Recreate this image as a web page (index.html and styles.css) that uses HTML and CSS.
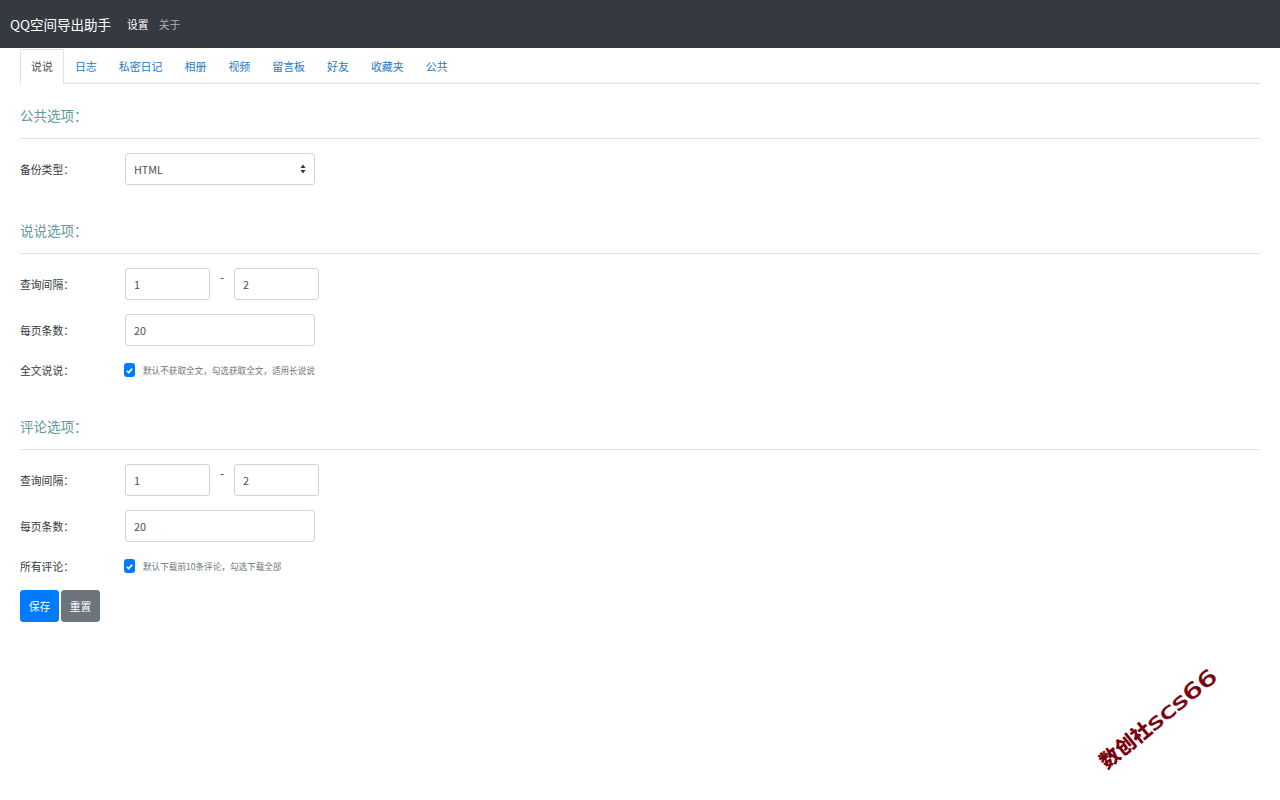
FILE: index.html
```html
<!DOCTYPE html>
<html lang="zh-CN">
<head>
<meta charset="utf-8">
<title>QQ空间导出助手</title>
<link rel="stylesheet" href="styles.css">
</head>
<body>
<nav class="navbar">
  <span class="brand">QQ空间导出助手</span>
  <a class="nav-link active">设置</a>
  <a class="nav-link">关于</a>
</nav>
<main class="content">
  <ul class="tabs">
    <li class="tab active">说说</li>
    <li class="tab">日志</li>
    <li class="tab">私密日记</li>
    <li class="tab">相册</li>
    <li class="tab">视频</li>
    <li class="tab">留言板</li>
    <li class="tab">好友</li>
    <li class="tab">收藏夹</li>
    <li class="tab">公共</li>
  </ul>

  <section class="section first">
    <h5 class="title">公共选项：</h5>
    <div class="row">
      <label class="label">备份类型：</label>
      <div class="select"><span>HTML</span>
        <svg class="carets" width="6" height="10" viewBox="0 0 6 10"><path d="M3 0.5 5.6 4H.4zM3 9.5.4 6h5.2z" fill="#343a40"/></svg>
      </div>
    </div>
  </section>

  <section class="section padded">
    <h5 class="title">说说选项：</h5>
    <div class="row">
      <label class="label">查询间隔：</label>
      <div class="input small">1</div>
      <span class="dash">-</span>
      <div class="input small">2</div>
    </div>
    <div class="row">
      <label class="label">每页条数：</label>
      <div class="input wide">20</div>
    </div>
    <div class="row check-row">
      <label class="label">全文说说：</label>
      <span class="check"><svg width="11" height="11" viewBox="0 0 11 11"><path d="M2.8 5.7 4.7 7.6 8.2 3.6" fill="none" stroke="#fff" stroke-width="1.6"/></svg></span>
      <small class="hint">默认不获取全文，勾选获取全文，适用长说说</small>
    </div>
  </section>

  <section class="section padded">
    <h5 class="title">评论选项：</h5>
    <div class="row">
      <label class="label">查询间隔：</label>
      <div class="input small">1</div>
      <span class="dash">-</span>
      <div class="input small">2</div>
    </div>
    <div class="row">
      <label class="label">每页条数：</label>
      <div class="input wide">20</div>
    </div>
    <div class="row check-row">
      <label class="label">所有评论：</label>
      <span class="check"><svg width="11" height="11" viewBox="0 0 11 11"><path d="M2.8 5.7 4.7 7.6 8.2 3.6" fill="none" stroke="#fff" stroke-width="1.6"/></svg></span>
      <small class="hint">默认下载前10条评论，勾选下载全部</small>
    </div>
  </section>

  <div class="actions">
    <button class="btn primary">保存</button>
    <button class="btn secondary">重置</button>
  </div>
</main>
<div class="watermark">数创社<span class="wm-latin">scs66</span></div>
</body>
</html>
```

FILE: styles.css
```css
* { box-sizing: border-box; }
html, body { height: 100%; }
body {
  margin: 0;
  background: #fff;
  color: #212529;
  font-family: "Noto Sans CJK SC", "Open Sans", sans-serif;
  font-size: 10.8px;
  font-weight: 400;
  overflow: hidden;
}
.navbar {
  display: flex;
  align-items: center;
  height: 48px;
  padding: 0 10px;
  background: #343a40;
}
.brand {
  color: #fff;
  font-size: 13.5px;
  margin-right: 16px;
}
.nav-link {
  color: rgba(255,255,255,.6);
  margin-right: 10px;
}
.nav-link.active { color: #fff; }
.content { padding: 0 20px; }
.tabs {
  display: flex;
  list-style: none;
  margin: 0;
  padding: 1px 0 0;
  height: 36px;
  border-bottom: 1px solid #dee2e6;
}
.tab {
  display: flex;
  align-items: center;
  height: 33px;
  padding: 0 11px;
  color: #1f78c4;
  font-size: 10.95px;
}
.tab.active {
  color: #495057;
  background: #fff;
  border: 1px solid #dee2e6;
  border-bottom: 0;
  border-radius: 2px 2px 0 0;
  height: 35px;
  padding: 0 10px 2px;
}
.section { margin-top: 31px; }
.section.first { margin-top: 17px; }
.section.padded { padding-bottom: 3px; }
.title {
  margin: 0 0 14px;
  height: 38px;
  padding-top: 3px;
  line-height: 22px;
  font-size: 13.5px;
  font-weight: 400;
  color: #5f9a9a;
  border-bottom: 1px solid #dee2e6;
}
.row {
  display: flex;
  align-items: center;
  height: 32px;
  margin-bottom: 14px;
}
.row:last-child { margin-bottom: 0; }
.label { width: 105px; flex: none; color: #343a40; }
.select, .input {
  display: flex;
  align-items: center;
  height: 32px;
  padding: 0 8px;
  color: #495057;
  background: #fff;
  border: 1px solid #ced4da;
  border-radius: 3px;
}
.select { width: 190px; justify-content: space-between; }
.carets { display: block; }
.input.small { width: 85px; }
.input.wide { width: 190px; }
.dash { width: 24px; text-align: center; align-self: flex-start; padding-top: 1px; }
.row.check-row { height: 16px; margin-top: 16px; margin-bottom: 0; }
.check {
  display: flex;
  align-items: center;
  justify-content: center;
  width: 11px;
  height: 14px;
  margin: 0 8px 0 -1px;
  background: #007bff;
  border-radius: 3px;
}
.hint { font-size: 8.6px; color: #6c757d; }
.actions { display: flex; gap: 2px; margin-top: 13px; }
.btn {
  width: 39px;
  height: 32px;
  padding: 0;
  font: inherit;
  color: #fff;
  border: 1px solid;
  border-radius: 3px;
}
.primary { background: #007bff; border-color: #007bff; }
.secondary { background: #6c757d; border-color: #6c757d; }
.watermark {
  position: absolute;
  left: 1085px;
  top: 702px;
  width: 146px;
  text-align: center;
  font-family: "Noto Sans CJK SC", sans-serif;
  font-size: 20px;
  line-height: 32px;
  font-weight: 900;
  color: #7a0010;
  white-space: nowrap;
  transform: rotate(-39deg);
}
.wm-latin {
  display: inline-block;
  font-family: "DejaVu Sans", sans-serif;
  font-size: 21px;
  font-weight: 400;
  margin-right: 24px;
  transform: scaleX(1.4);
  transform-origin: left center;
  -webkit-text-stroke: .6px #7a0010;
}
```
